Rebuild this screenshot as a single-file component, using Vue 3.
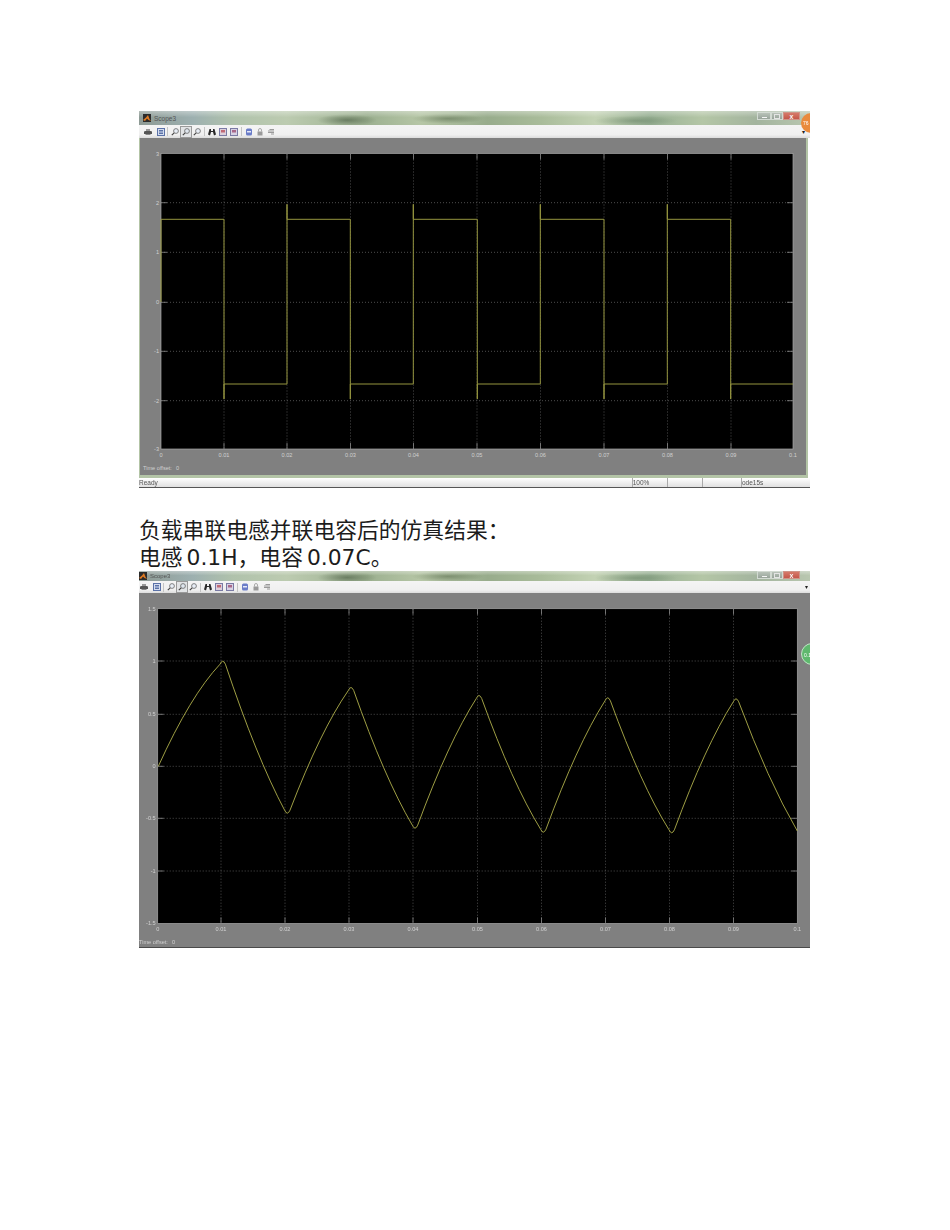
<script setup>
const squareWave =
  "M161 302V219.3H224V399V384H287V204.3V219.3H350.3V399V384H413.3V204.3V219.3H477.3V399V384H540.3V204.3V219.3H604V399V384H667.3V204.3V219.3H730.7V399V384H793";

// peaks and valleys read off the reference, the curve bows a little between them
const extremes = [
  [222.7, 660.7],
  [287.3, 813.7],
  [351, 687],
  [415, 828.7],
  [479, 695],
  [543.3, 832.7],
  [607.7, 697.3],
  [671.7, 833.3],
  [736, 698.3],
];

function buildTriangle() {
  let d = "M158.3 766.3";
  let from = [158.3, 766.3];
  extremes.forEach(([x, y], i) => {
    const rising = i % 2 === 0;
    const edge = rising ? 3.5 : -3.5;
    const bow = rising ? -18 : 18;
    const midX = (from[0] + x) / 2;
    const midY = (from[1] + y) / 2;
    d += `Q${midX} ${midY + bow} ${x - 2.7} ${y + edge}`;
    d += `Q${x} ${y - edge * 0.7} ${x + 2.7} ${y + edge}`;
    from = [x + 2.7, y + edge];
  });
  const endMidX = (from[0] + 797.3) / 2;
  const endMidY = (from[1] + 831) / 2;
  return d + `Q${endMidX} ${endMidY + 14} 797.3 831`;
}

const triangleWave = buildTriangle();

const xNames = ["0", "0.01", "0.02", "0.03", "0.04", "0.05", "0.06", "0.07", "0.08", "0.09", "0.1"];

const scopes = [
  {
    id: "square",
    box: { x: 139, y: 138, w: 671, h: 340 },
    panel: { x: 140, y: 138, w: 666, h: 337 },
    frame: { x: 139, y: 138, w: 669, h: 340 },
    plot: { x: 161, y: 153.5, w: 632, h: 295.5 },
    wave: squareWave,
    xTicks: [161, 224, 287, 350.5, 413.5, 477, 540.5, 604, 667.5, 731, 793],
    yTicks: [
      { y: 153.5, name: "3" },
      { y: 202.7, name: "2" },
      { y: 252.3, name: "1" },
      { y: 302.3, name: "0" },
      { y: 351.3, name: "-1" },
      { y: 400.7, name: "-2" },
      { y: 449, name: "-3" },
    ],
    offsetAt: { x: 143, y: 470, zero: 176 },
    badge: { text: "76", tone: "orange" },
  },
  {
    id: "triangle",
    caption: ["负载串联电感并联电容后的仿真结果：", "电感 0.1H，电容 0.07C。"],
    box: { x: 139, y: 593, w: 671, h: 355 },
    panel: { x: 139, y: 593, w: 671, h: 354 },
    plot: { x: 157.7, y: 608.7, w: 639.6, h: 314.7 },
    wave: triangleWave,
    xTicks: [157.7, 221, 285, 349, 413, 477.5, 541.5, 605.5, 669.5, 733.5, 797.3],
    yTicks: [
      { y: 608.7, name: "1.5" },
      { y: 661, name: "1" },
      { y: 714.3, name: "0.5" },
      { y: 766.3, name: "0" },
      { y: 818.3, name: "-0.5" },
      { y: 871, name: "-1" },
      { y: 923.4, name: "-1.5" },
    ],
    offsetAt: { x: 139, y: 944, zero: 172 },
    badge: { text: "0.1", tone: "green" },
    compact: true,
  },
];
</script>

<template>
  <main class="page">
    <template v-for="scope in scopes" :key="scope.id">
      <div v-if="scope.caption" class="caption">
        <p v-for="line in scope.caption" :key="line">{{ line }}</p>
      </div>

      <section class="scope" :class="{ compact: scope.compact }">
        <header class="titlebar">
          <svg class="logo" viewBox="0 0 8 8">
            <rect width="8" height="8" fill="#2b2b2b" />
            <path d="M0 6 3 3.500 5 1l1.500 4L8 7 5.500 6 4 4.500 2 7Z" fill="#e07a22" />
          </svg>
          <span class="title">Scope3</span>
          <div class="winbtns">
            <span class="winbtn"><i class="min"></i></span>
            <span class="winbtn"><i class="max"></i></span>
            <span class="winbtn close"><b>x</b></span>
          </div>
        </header>

        <div class="toolbar">
          <div class="group wide">
            <svg class="ico" viewBox="0 0 8 8">
              <path d="M2 1h4v2H2z" fill="#999" />
              <path d="M0 3.500 1.500 3h5L8 3.500V6H0z" fill="#555" />
              <path d="M1.500 6h5v1h-5z" fill="#888" />
            </svg>
            <svg class="ico" viewBox="0 0 8 8">
              <rect x=".5" y=".5" width="7" height="7" fill="#d5ddef" stroke="#5b72a8" />
              <path d="M2 2.500h4M2 4h4M2 5.500h4" stroke="#5b72a8" />
            </svg>
          </div>
          <i class="sep first"></i>
          <div class="group">
            <svg class="ico" viewBox="0 0 8 8">
              <circle cx="5" cy="3" r="2.400" fill="#e8eef6" stroke="#666" stroke-width=".8" />
              <path d="M3.200 4.800.8 7.200" stroke="#444" stroke-width="1.200" />
            </svg>
            <span class="pressed">
              <svg class="ico" viewBox="0 0 8 8">
                <circle cx="5" cy="3" r="2.400" fill="#dfe6ee" stroke="#666" stroke-width=".8" />
                <path d="M3.200 4.800.8 7.200" stroke="#444" stroke-width="1.200" />
              </svg>
            </span>
            <svg class="ico" viewBox="0 0 8 8">
              <circle cx="5" cy="3" r="2.400" fill="#e8eef6" stroke="#666" stroke-width=".8" />
              <path d="M3.200 4.800.8 7.200" stroke="#444" stroke-width="1.200" />
            </svg>
          </div>
          <i class="sep"></i>
          <div class="group">
            <svg class="ico" viewBox="0 0 8 8">
              <path d="M1.500 1h1.500v2h2V1h1.500L8 6.500 6 7.500 5 4H3L2 7.500 0 6.500z" fill="#2a2a2a" />
            </svg>
            <svg class="ico" viewBox="0 0 8 8">
              <rect x=".5" y=".5" width="7" height="7" fill="#ddd0dc" stroke="#7a7aa4" />
              <path d="M2 2h4v2.500H2z" fill="#c06a76" />
            </svg>
            <svg class="ico" viewBox="0 0 8 8">
              <rect x=".5" y=".5" width="7" height="7" fill="#d8d2e4" stroke="#7a7aa4" />
              <path d="M2 2h4v2.500H2z" fill="#a8688a" />
            </svg>
          </div>
          <i class="sep"></i>
          <div class="group">
            <svg class="ico" viewBox="0 0 8 8">
              <rect x="1" y=".5" width="6" height="7" rx="1.500" fill="#6a7cc8" />
              <path d="M2 3h4v1.500H2z" fill="#e4e8f8" />
            </svg>
            <svg class="ico" viewBox="0 0 8 8">
              <path d="M2.500 3.500V2a1.500 1.500 0 0 1 3 0v1.500" fill="none" stroke="#aaa" />
              <rect x="1.500" y="3.500" width="5" height="4" fill="#999" />
            </svg>
            <svg class="ico" viewBox="0 0 8 8">
              <path d="M1 3h6M2.500 1.500h4.500M1 4.500h6M4 6h3" stroke="#9a9a9a" />
            </svg>
          </div>
          <span class="more">▾</span>
        </div>

        <svg
          class="display"
          :viewBox="`${scope.box.x} ${scope.box.y} ${scope.box.w} ${scope.box.h}`"
          :style="{ height: scope.box.h + 'px' }"
        >
          <rect
            v-if="scope.frame"
            :x="scope.frame.x"
            :y="scope.frame.y"
            :width="scope.frame.w"
            :height="scope.frame.h"
            fill="#b3c4a6"
          />
          <rect v-else :x="scope.box.x" :y="scope.box.h + scope.box.y - 1" :width="scope.box.w" height="1" fill="#4a4a4a" />
          <rect :x="scope.panel.x" :y="scope.panel.y" :width="scope.panel.w" :height="scope.panel.h" fill="#808080" />
          <rect :x="scope.plot.x" :y="scope.plot.y" :width="scope.plot.w" :height="scope.plot.h" fill="#000" stroke="#a6a6a6" stroke-width=".7" />

          <!-- grid -->
          <g v-for="(x, i) in scope.xTicks" :key="'x' + i">
            <template v-if="i > 0 && i < 10">
              <line :x1="x" :x2="x" :y1="scope.plot.y" :y2="scope.plot.y + scope.plot.h" class="grid" />
              <line :x1="x" :x2="x" :y1="scope.plot.y" :y2="scope.plot.y + 6" class="tick" />
              <line :x1="x" :x2="x" :y1="scope.plot.y + scope.plot.h - 6" :y2="scope.plot.y + scope.plot.h" class="tick" />
            </template>
            <text :x="x" :y="scope.plot.y + scope.plot.h + 7.500" text-anchor="middle" class="axis">{{ xNames[i] }}</text>
          </g>
          <g v-for="(t, i) in scope.yTicks" :key="'y' + i">
            <template v-if="i > 0 && i < 6">
              <line :x1="scope.plot.x" :x2="scope.plot.x + scope.plot.w" :y1="t.y" :y2="t.y" class="grid" />
              <line :x1="scope.plot.x" :x2="scope.plot.x + 6" :y1="t.y" :y2="t.y" class="tick" />
              <line :x1="scope.plot.x + scope.plot.w - 6" :x2="scope.plot.x + scope.plot.w" :y1="t.y" :y2="t.y" class="tick" />
            </template>
            <text :x="scope.plot.x - 2" :y="t.y + 2" text-anchor="end" class="axis">{{ t.name }}</text>
          </g>

          <path :d="scope.wave" class="wave" :class="{ thin: scope.compact }" />

          <text :x="scope.offsetAt.x" :y="scope.offsetAt.y" class="axis">Time offset:</text>
          <text :x="scope.offsetAt.zero" :y="scope.offsetAt.y" class="axis">0</text>
        </svg>

        <footer v-if="!scope.compact" class="status">
          <span class="cell ready">Ready</span>
          <span class="cell pct">100%</span>
          <span class="cell blank"></span>
          <span class="cell blank"></span>
          <span class="cell solver">ode15s</span>
        </footer>

        <span class="badge" :class="scope.badge.tone">{{ scope.badge.text }}</span>
      </section>
    </template>
  </main>
</template>

<style scoped>
.page {
  width: 671px;
  margin-left: 139px;
  padding-top: 111px;
  font-family: "DejaVu Sans", "Noto Sans CJK SC", sans-serif;
}
.caption {
  padding-top: 29px;
  font-size: 21.8px;
  line-height: 27px;
  word-spacing: -3px;
  color: #1c1c1c;
}
.caption p {
  margin: 0;
  white-space: nowrap;
}
.scope {
  position: relative;
  overflow: hidden;
  filter: blur(0.4px);
  font-family: "Liberation Sans", sans-serif;
}
.titlebar {
  display: flex;
  align-items: center;
  height: 14px;
  padding-left: 4px;
  background:
    linear-gradient(rgba(255, 255, 255, 0.35), rgba(255, 255, 255, 0) 45%),
    radial-gradient(ellipse 30px 6px at 31% 65%, rgba(50, 70, 45, 0.5), transparent),
    radial-gradient(ellipse 36px 5px at 46% 55%, rgba(60, 80, 50, 0.4), transparent),
    radial-gradient(ellipse 42px 5px at 74% 70%, rgba(70, 100, 70, 0.35), transparent),
    linear-gradient(90deg, #8d9a94 0, #9db0b0 8%, #b0c2ac 14%, #bccbb0 22%, #9cb090 34%, #b6c6a6 42%, #98ac8c 52%, #a9bc9a 60%, #c3d2b4 68%, #98b094 76%, #b4c6a6 84%, #a3b49e 92%, #b9c7b0 100%);
}
.logo {
  width: 8px;
  height: 8px;
  flex: none;
}
.title {
  margin-left: 3px;
  font-size: 6.5px;
  color: #555;
}
.winbtns {
  display: flex;
  margin-left: auto;
  margin-right: 10px;
  align-self: flex-start;
  margin-top: 1px;
}
.winbtn {
  display: flex;
  align-items: center;
  justify-content: center;
  box-sizing: border-box;
  width: 14px;
  height: 8px;
  background: linear-gradient(#b8c2b8, #98a49a);
  border: 0.5px solid #d2dad2;
}
.winbtn + .winbtn {
  width: 12px;
}
.winbtn .min {
  width: 5px;
  height: 1.5px;
  margin-top: 3px;
  background: #f4f4f4;
}
.winbtn .max {
  width: 4px;
  height: 3px;
  border: 1px solid #e4e4e4;
}
.winbtn.close {
  width: 17px;
  border-color: #cf9488;
  background: linear-gradient(#d67a6a, #c4574a);
}
.winbtn.close b {
  font-size: 7px;
  line-height: 7px;
  color: #f7f7f7;
}
.toolbar {
  display: flex;
  align-items: center;
  height: 13px;
  padding-left: 5px;
  background: linear-gradient(#f4f4f4 0, #f0f0f0 75%, #dcdcdc 100%);
}
.group {
  display: flex;
  align-items: center;
  gap: 3px;
}
.group.wide {
  gap: 5px;
}
.ico {
  display: block;
  width: 8px;
  height: 8px;
  flex: none;
}
.pressed {
  display: block;
  margin: -1px;
  padding: 1px;
  background: #e2e4e6;
  outline: 0.5px solid #9a9a9a;
}
.sep {
  width: 1px;
  height: 9px;
  margin: 0 3px 0 3px;
  background: #c4c4c4;
}
.sep.first {
  margin-left: 2px;
}
.more {
  margin-left: auto;
  margin-right: 5px;
  font-size: 6px;
  line-height: 8px;
  color: #222;
}
.display {
  display: block;
  width: 100%;
}
.grid {
  stroke: #6e6e6e;
  stroke-width: 0.7;
  stroke-dasharray: 1 2;
}
.tick {
  stroke: #8a8a8a;
  stroke-width: 0.8;
}
.axis {
  font-size: 5.6px;
  fill: #d0d0d0;
}
.wave {
  fill: none;
  stroke: #95953f;
  stroke-width: 1;
}
.wave.thin {
  stroke: #b0b04c;
  stroke-width: 0.9;
}
.status {
  display: flex;
  box-sizing: border-box;
  height: 10px;
  border-bottom: 0.5px solid #555;
  background: linear-gradient(#ffffff, #e0e0e0);
  font-size: 6.5px;
  line-height: 10px;
  color: #555;
}
.cell {
  flex: none;
  box-sizing: border-box;
  border-left: 0.5px solid #aaa;
}
.ready {
  width: 492.7px;
  border-left: 0;
}
.pct {
  width: 35.3px;
}
.blank {
  width: 35px;
}
.blank + .blank {
  width: 39px;
}
.solver {
  flex: 1;
}
.badge {
  position: absolute;
  left: 662px;
  top: 2px;
  width: 20px;
  height: 20px;
  border-radius: 50%;
  padding-left: 2px;
  font-size: 5px;
  line-height: 20px;
  white-space: nowrap;
  color: #fff;
  background: #e98a3c;
  box-sizing: border-box;
}
.badge.green {
  top: 72px;
  width: 22px;
  height: 22px;
  line-height: 22px;
  background: #5fb86e;
  border: 0.5px solid #bfe6c6;
}
.compact .titlebar {
  height: 10px;
  padding-left: 0;
}
.compact .winbtns {
  margin-top: 0;
}
.compact .title {
  font-size: 6px;
}
.compact .toolbar {
  height: 12px;
  padding-left: 1px;
}
.compact .more {
  margin-right: 2px;
}
</style>

<style>
html,
body {
  background: #fff;
}
</style>
